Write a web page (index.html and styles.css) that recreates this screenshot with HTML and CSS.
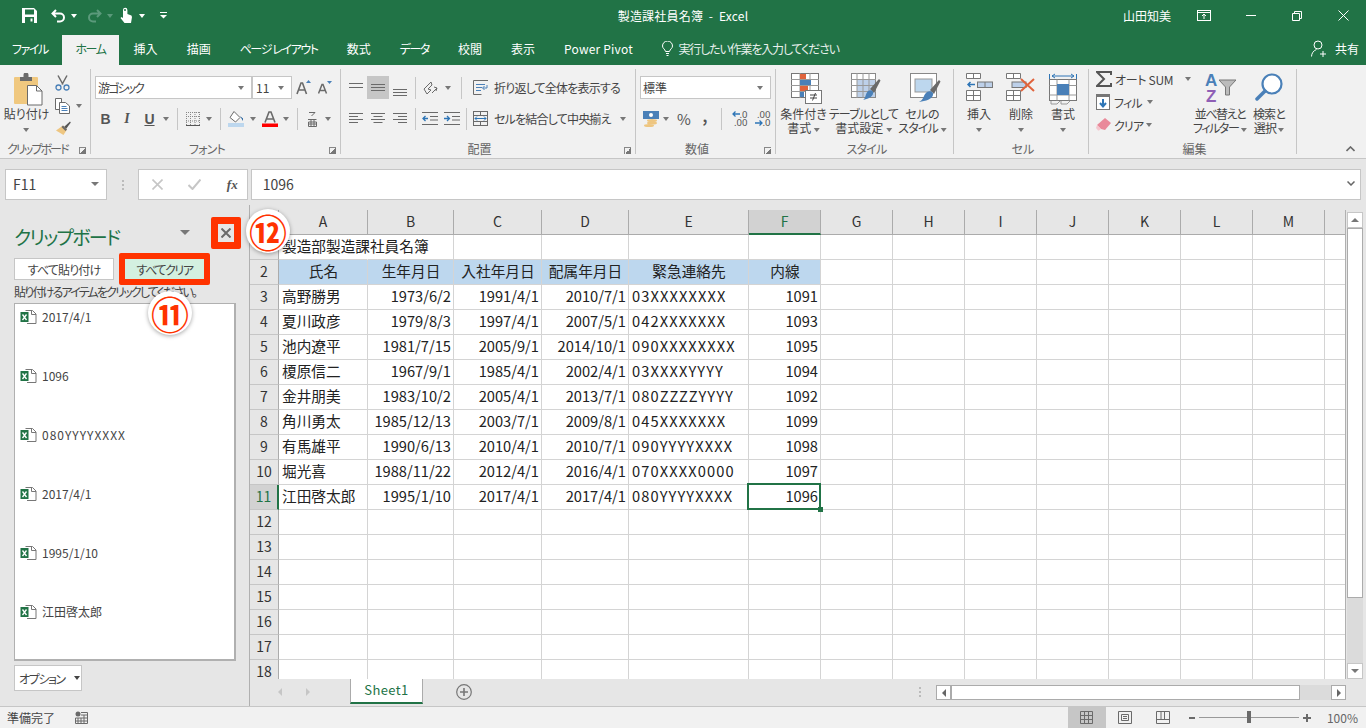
FILE: index.html
```html
<!DOCTYPE html>
<html lang="ja">
<head>
<meta charset="utf-8">
<title>製造課社員名簿 - Excel</title>
<link rel="stylesheet" href="styles.css">
</head>
<body>
<svg class="defs" aria-hidden="true">
  <symbol id="xl" viewBox="0 0 17 16">
    <path d="M5.500 1.500h7l3.500 3.500v9.500h-9" fill="#fff" stroke="#777"/><path d="M11.500 1.500v4h4.500" fill="none" stroke="#777"/>
    <rect x="0.500" y="3" width="8" height="10" fill="#217346"/><path d="M2.500 5.500l4 5.500M6.500 5.500l-4 5.500" stroke="#fff" stroke-width="1.300"/>
  </symbol>
</svg>
<div class="app">
  <header class="titlebar">
    <div class="qat">
      <svg class="q-save" width="15" height="15" viewBox="0 0 15 15"><path d="M0 0h12l3 3v12H0z" fill="#fff"/><rect x="3" y="1.500" width="9" height="5" fill="#217346"/><rect x="3" y="9" width="9" height="6" fill="#217346"/><rect x="8.500" y="10.500" width="2" height="3" fill="#fff"/></svg>
      <svg class="q-undo" width="15" height="14" viewBox="0 0 15 14"><path d="M5 1L1.500 4.500 5 8M2 4.500h7a4 4 0 0 1 0 8H6" fill="none" stroke="#fff" stroke-width="2"/></svg>
      <i class="caret white q-c1"></i>
      <svg class="q-redo" width="15" height="14" viewBox="0 0 15 14"><path d="M10 1l3.500 3.500L10 8M13 4.500H6a4 4 0 0 0 0 8h3" fill="none" stroke="#5b9a7b" stroke-width="2"/></svg>
      <i class="caret dim q-c2"></i>
      <svg class="q-touch" width="13" height="17" viewBox="0 0 13 17"><path d="M3 3a2.200 2.200 0 0 1 4.400 0v4l4 1.500.6 1.500-1 6H4.500L.5 11l1-1 1.500 1z" fill="#fff"/><circle cx="5" cy="3" r="1" fill="#217346"/></svg>
      <i class="caret white q-c3"></i>
      <svg class="q-more" width="7" height="7" viewBox="0 0 7 7"><path d="M0 .5h7" stroke="#fff"/><path d="M0 3h7L3.500 6.500z" fill="#fff"/></svg>
    </div>
    <div class="doc-title">製造課社員名簿&nbsp;&nbsp;-&nbsp;&nbsp;Excel</div>
    <div class="win">
      <span class="user">山田知美</span>
      <svg class="w-disp" width="14" height="11" viewBox="0 0 14 11"><rect x=".5" y=".5" width="13" height="10" fill="none" stroke="#fff"/><path d="M0 2.500h14M7 9V4M5 6l2-2 2 2" fill="none" stroke="#fff"/></svg>
      <svg class="w-min" width="10" height="1" viewBox="0 0 10 1"><path d="M0 .5h10" stroke="#fff"/></svg>
      <svg class="w-rest" width="10" height="10" viewBox="0 0 10 10"><path d="M.5 2.500h7v7h-7zM2.500 2.500v-2h7v7h-2" fill="none" stroke="#fff"/></svg>
      <svg class="w-close" width="11" height="11" viewBox="0 0 11 11"><path d="M.5.500l10 10M10.500.500l-10 10" stroke="#fff"/></svg>
    </div>
  </header>

  <nav class="tabs">
    <span class="tab first kana">ファイル</span>
    <span class="tab active kana">ホーム</span>
    <span class="tab">挿入</span>
    <span class="tab">描画</span>
    <span class="tab kana">ページ レイアウト</span>
    <span class="tab">数式</span>
    <span class="tab kana">データ</span>
    <span class="tab">校閲</span>
    <span class="tab">表示</span>
    <span class="tab latin">Power Pivot</span>
    <span class="tell">
      <svg width="11" height="15" viewBox="0 0 11 15"><path d="M3.500 10.500C3 8 .5 7.500.5 5a5 5 0 0 1 10 0c0 2.500-2.500 3-3 5.500zM4 12.500h3M4.500 14.500h2" fill="none" stroke="#fff"/></svg>
      <span>実行したい作業を入力してください</span>
    </span>
    <span class="share">
      <svg width="17" height="17" viewBox="0 0 17 17"><circle cx="7" cy="5" r="4" fill="none" stroke="#fff"/><path d="M.5 16.500c0-3 2-6 5-7M12 11v6M9 14h6" fill="none" stroke="#fff"/></svg>
      共有
    </span>
  </nav>

  <section class="ribbon">
    <div class="group g-clip">
      <div class="g-body clip-body">
        <div class="big paste">
          <svg width="30" height="34" viewBox="0 0 30 34"><rect x="0" y="4" width="24" height="27" rx="1" fill="#f0c87f"/><path d="M6 8V4h3.500V2a2.500 2.500 0 0 1 5 0v2H18v4z" fill="#6a6a6a"/><path d="M13.500 12.500h9l5.500 5.500v14H13.500z" fill="#fff" stroke="#6a6a6a"/><path d="M22.500 12.500V18H28" fill="none" stroke="#6a6a6a"/></svg>
          <span class="big-label">貼り付け<br><i class="caret"></i></span>
        </div>
        <div class="clip-col">
          <svg width="15" height="16" viewBox="0 0 15 16"><path d="M3 .5l5 9M12 .5l-5 9" stroke="#6a6a6a" stroke-width="1.500"/><circle cx="3.500" cy="12.500" r="2.500" fill="none" stroke="#4a80b8" stroke-width="1.300"/><circle cx="11.500" cy="12.500" r="2.500" fill="none" stroke="#4a80b8" stroke-width="1.300"/></svg>
          <div class="clip-copy">
            <svg width="15" height="16" viewBox="0 0 15 16"><path d="M.5.500h6v11h-6z" fill="#fff" stroke="#6a6a6a"/><path d="M4.500 4.500h6l4 3.500v7.500h-10z" fill="#fff" stroke="#6a6a6a"/><path d="M6.500 8.500h5M6.500 10.500h6M6.500 12.500h6" stroke="#4a80b8"/></svg>
            <i class="caret"></i>
          </div>
          <svg width="16" height="15" viewBox="0 0 16 15"><path d="M9 6l6-5.500.8 1L11 8z" fill="#555"/><path d="M8 4.500l4 4-3.500 5.500L1 9.500z" fill="#eec681"/><path d="M8 4.500l4 4-1.500 1.500-4-4z" fill="#6a6a6a"/></svg>
        </div>
      </div>
      <div class="g-label"><span class="k3">クリップボード</span><i class="launch"></i></div>
    </div>

    <div class="group g-font">
      <div class="g-body">
        <div class="row">
          <div class="select s-font"><span class="k3">游ゴシック</span><i class="caret"></i></div>
          <div class="select s-size"><span>11</span><i class="caret"></i></div>
          <div class="tool w21 ml1"><svg width="15" height="15" viewBox="0 0 15 15"><path d="M1 14L5 3h1.500l4 11M2.500 10h6" fill="none" stroke="#6a6a6a" stroke-width="1.600"/><path d="M10 3l2.500-3L15 3z" fill="#4a80b8"/></svg></div>
          <div class="tool w22"><svg width="14" height="13" viewBox="0 0 14 13"><path d="M.5 12.500L4 3.500h1l3.500 9M2 9.500h5" fill="none" stroke="#6a6a6a" stroke-width="1.500"/><path d="M9 0h5l-2.500 3z" fill="#4a80b8"/></svg></div>
        </div>
        <div class="row">
          <div class="tool w21 fmt b">B</div>
          <div class="tool w22 fmt it">I</div>
          <div class="tool w23 fmt un">U</div>
          <div class="tool w10"><i class="caret"></i></div>
          <div class="tool w12"><i class="vsep"></i></div>
          <div class="tool w19"><svg width="14" height="14" viewBox="0 0 14 14"><path d="M.5 0v14M4.500 0v13M9 0v13M13.500 0v13M0 .5h14M0 4.500h14M0 9h14" stroke="#888" stroke-dasharray="1 1" fill="none"/><path d="M0 13.500h14" stroke="#555"/></svg></div>
          <div class="tool w13"><i class="caret"></i></div>
          <div class="tool w10"><i class="vsep"></i></div>
          <div class="tool w22"><svg width="17" height="16" viewBox="0 0 17 16"><path d="M6 .5l6 6-4.500 4.500L2 6.500z" fill="#fff" stroke="#6a6a6a"/><path d="M12 5l3 2.500V10z" fill="#1f5f9e"/><rect x="0" y="12" width="16" height="4" fill="#bdd7ee"/></svg></div>
          <div class="tool w11"><i class="caret"></i></div>
          <div class="tool w24"><svg width="16" height="16" viewBox="0 0 16 16"><path d="M3 11.500L7 1h2l4 10.500M4.500 8h7" fill="none" stroke="#6a6a6a" stroke-width="1.600"/><rect x="0" y="12.500" width="16" height="3.500" fill="#f00"/></svg></div>
          <div class="tool w8"><i class="caret"></i></div>
          <div class="tool w14"><i class="vsep"></i></div>
          <div class="tool w16"><svg width="9" height="16" viewBox="0 0 9 16"><path d="M1 1.500h6L3.500 5M0 8.500h8.500M.5 11h8v4.500h-8zM3 8.500v7M6 8.500v7M.5 13h8" fill="none" stroke="#6a6a6a"/></svg></div>
          <div class="tool w16"><i class="caret"></i></div>
        </div>
      </div>
      <div class="g-label"><span class="center k1">フォント</span><i class="launch"></i></div>
    </div>

    <div class="group g-align">
      <div class="g-body">
        <div class="row">
          <div class="tool w22"><svg width="14" height="9" viewBox="0 0 14 9"><path d="M0 .5h14M0 4.500h14" stroke="#6a6a6a"/></svg></div>
          <div class="tool w22 on"><svg width="14" height="7" viewBox="0 0 14 7"><path d="M0 .5h14M0 3.500h14M0 6.500h14" stroke="#6a6a6a"/></svg></div>
          <div class="tool w22 low"><svg width="14" height="7" viewBox="0 0 14 7"><path d="M0 .5h14M0 3.500h14M0 6.500h14" stroke="#6a6a6a"/></svg></div>
          <div class="tool w8"><i class="vsep"></i></div>
          <div class="tool w24"><svg width="16" height="16" viewBox="0 0 16 16"><path d="M1 9l7-7 1 3-4 4 3 1-4 4zM9 13l5-5M11 7l3 1-1 3" fill="none" stroke="#6a6a6a"/></svg></div>
          <div class="tool w10"><i class="caret"></i></div>
          <div class="tool w17"><i class="vsep"></i></div>
          <div class="tool w20"><svg width="15" height="15" viewBox="0 0 15 15"><path d="M.5.500h15M.5.500v14h8" fill="none" stroke="#6a6a6a"/><path d="M3 4.500h9M3 7.500h6M3 10.500h5" stroke="#4a80b8"/><path d="M14 5v3h-4M11.500 6L9.500 8l2 2" fill="none" stroke="#4a80b8"/></svg></div>
          <span class="tool-text k1">折り返して全体を表示する</span>
        </div>
        <div class="row">
          <div class="tool w22"><svg width="14" height="11" viewBox="0 0 14 11"><path d="M0 .5h14M0 3.500h9M0 6.500h14M0 9.500h9" stroke="#6a6a6a"/></svg></div>
          <div class="tool w22"><svg width="14" height="11" viewBox="0 0 14 11"><path d="M0 .5h14M2.500 3.500h9M0 6.500h14M2.500 9.500h9" stroke="#6a6a6a"/></svg></div>
          <div class="tool w22"><svg width="14" height="11" viewBox="0 0 14 11"><path d="M0 .5h14M5 3.500h9M0 6.500h14M5 9.500h9" stroke="#6a6a6a"/></svg></div>
          <div class="tool w8"><i class="vsep"></i></div>
          <div class="tool w22"><svg width="16" height="13" viewBox="0 0 16 13"><path d="M0 .5h16M8 4.500h8M8 8h8M0 12.500h16" stroke="#6a6a6a"/><path d="M6 6.500H1M3.500 4l-2.500 2.500L3.500 9" fill="none" stroke="#2e75b6" stroke-width="1.300"/></svg></div>
          <div class="tool w22"><svg width="16" height="13" viewBox="0 0 16 13"><path d="M0 .5h16M8 4.500h8M8 8h8M0 12.500h16" stroke="#6a6a6a"/><path d="M0 6.500h5M3 4l2.500 2.500L3 9" fill="none" stroke="#2e75b6" stroke-width="1.300"/></svg></div>
          <div class="tool w7"><i class="vsep"></i></div>
          <div class="tool w20"><svg width="15" height="15" viewBox="0 0 15 15"><rect x=".5" y=".5" width="14" height="14" fill="none" stroke="#6a6a6a"/><path d="M0 4.500h15M0 10.500h15M7.500 0v4.500M7.500 10.500v4.500" stroke="#6a6a6a"/><path d="M2 7.500h11M4 5.500l-2 2 2 2M11 5.500l2 2-2 2" fill="none" stroke="#2e75b6"/></svg></div>
          <span class="tool-text k1">セルを結合して中央揃え</span>
          <i class="caret ml9"></i>
        </div>
      </div>
      <div class="g-label"><span class="center">配置</span><i class="launch"></i></div>
    </div>

    <div class="group g-num">
      <div class="g-body">
        <div class="row">
          <div class="select s-num"><span>標準</span><i class="caret"></i></div>
        </div>
        <div class="row">
          <div class="tool w22"><svg width="17" height="16" viewBox="0 0 17 16"><rect x="0" y="0" width="16" height="8" fill="#4a80b8"/><circle cx="8" cy="4" r="2" fill="#fff"/><ellipse cx="9" cy="9.500" rx="5" ry="1.500" fill="#eec681"/><ellipse cx="9" cy="12" rx="5" ry="1.500" fill="#eec681"/><ellipse cx="6" cy="14.500" rx="5" ry="1.500" fill="#eec681"/></svg></div>
          <div class="tool w8"><i class="caret"></i></div>
          <div class="tool w28 pct">%</div>
          <div class="tool w14 comma">,</div>
          <div class="tool w18"><i class="vsep"></i></div>
          <div class="tool w20"><svg class="dec-icon" width="16" height="17" viewBox="0 0 16 17"><path d="M8 4H1.500M3.500 1.500L1 4l2.500 2.500" fill="none" stroke="#2e75b6" stroke-width="1.300"/><text x="7.500" y="7.500" class="dec">.0</text><text x="2" y="16" class="dec">.00</text></svg></div>
          <div class="tool w24"><svg class="dec-icon" width="16" height="17" viewBox="0 0 16 17"><text x="3" y="7.500" class="dec">.00</text><path d="M1 13h6.500M5.500 10.500L8 13l-2.500 2.500" fill="none" stroke="#2e75b6" stroke-width="1.300"/><text x="8.500" y="16" class="dec">.0</text></svg></div>
        </div>
      </div>
      <div class="g-label"><span class="center">数値</span><i class="launch"></i></div>
    </div>

    <div class="group g-style">
      <div class="g-body big-row">
        <div class="big w59">
          <svg width="31" height="31" viewBox="0 0 31 31"><rect x=".5" y=".5" width="27" height="24" fill="#fff" stroke="#777"/><path d="M9 0v25M19 0v25M0 6.500h28M0 12.500h28M0 18.500h28" stroke="#999"/><rect x="9" y="1" width="6" height="5" fill="#e0633c"/><rect x="9" y="7" width="11" height="5" fill="#4a80b8"/><rect x="9" y="13" width="8" height="5" fill="#e0633c"/><rect x="9" y="19" width="4" height="5" fill="#4a80b8"/><rect x="14.500" y="17.500" width="16" height="13" fill="#fff" stroke="#777"/><path d="M19 22h7M19 25h7M24.500 20l-3 7.500" stroke="#444" fill="none"/></svg>
          <span class="big-label">条件付き<br>書式 <i class="caret"></i></span>
        </div>
        <div class="big w59 wide">
          <svg width="30" height="29" viewBox="0 0 30 29"><rect x=".5" y=".5" width="24" height="24" fill="#fff" stroke="#888"/><rect x="6" y="6" width="18" height="18" fill="#bdd0e9"/><path d="M6 0v25M12 0v25M18 0v25M0 6.500h25M0 12.500h25M0 18.500h25" stroke="#999"/><path d="M19 16l9-10 1.500 1.500L23 20z" fill="#6a6a6a"/><path d="M17 18c3-2 6 0 5 3-1 3-5 5-10 6 3-2 2-6 5-9z" fill="#4a80b8"/></svg>
          <span class="big-label"><span class="k1">テーブルとして</span><br>書式設定 <i class="caret"></i></span>
        </div>
        <div class="big w59">
          <svg width="31" height="30" viewBox="0 0 31 30"><rect x=".5" y=".5" width="26" height="24" fill="#fff" stroke="#888"/><rect x="5" y="6" width="17" height="13" fill="#bdd7ee" stroke="#999"/><path d="M20 17l9-10 1.500 1.500L24 21z" fill="#6a6a6a"/><path d="M17 19c3-2 7 0 6 3-1 4-7 6-14 7 5-2 4-7 8-10z" fill="#4a80b8"/></svg>
          <span class="big-label">セルの<br><span class="k1">スタイル</span> <i class="caret"></i></span>
        </div>
      </div>
      <div class="g-label"><span class="center k1">スタイル</span></div>
    </div>

    <div class="group g-cell">
      <div class="g-body big-row">
        <div class="big w42">
          <svg width="27" height="28" viewBox="0 0 27 28"><path d="M.5.500h14v5h-14zM7.500.500v5M.5 17.500h14v10H.5zM.5 22.500h14M7.500 17.500v10" fill="#fff" stroke="#777"/><rect x="11.500" y="9" width="15" height="5.500" fill="#bdd0e9" stroke="#777"/><path d="M9 11.500H2M4.500 9L2 11.500 4.500 14" fill="none" stroke="#2e75b6" stroke-width="1.500"/><path d="M19 9v5.500" stroke="#777"/></svg>
          <span class="big-label">挿入<br><i class="caret"></i></span>
        </div>
        <div class="big w42">
          <svg width="30" height="28" viewBox="0 0 30 28"><path d="M.5.500h14v5h-14zM7.500.500v5M.5 17.500h14v10H.5zM.5 22.500h14M7.500 17.500v10" fill="#fff" stroke="#777"/><rect x="6" y="9" width="14" height="5.500" fill="#bdd0e9" stroke="#777"/><path d="M15 6l13 12M28 6L15 18" stroke="#e0633c" stroke-width="2"/></svg>
          <span class="big-label">削除<br><i class="caret"></i></span>
        </div>
        <div class="big w42">
          <svg width="28" height="32" viewBox="0 0 28 32"><path d="M.5 1v5M27.500 1v5M3 3h22M6 1L3 3l3 2M22 1l3 2-3 2" fill="none" stroke="#2e75b6"/><rect x=".5" y="6.500" width="27" height="21" fill="#fff" stroke="#777"/><path d="M8 6.500v21M20 6.500v21M.5 12.500h27M.5 22h27" stroke="#999"/><rect x="8" y="11" width="12" height="11" fill="#4a80b8"/><path d="M2 28v3h6l3-3M12 28v3h6l3-3" fill="none" stroke="#999"/></svg>
          <span class="big-label">書式<br><i class="caret"></i></span>
        </div>
      </div>
      <div class="g-label"><span class="center">セル</span></div>
    </div>

    <div class="group g-edit">
      <div class="g-body edit-body">
        <div class="edit-col">
          <div class="edit-row">
            <svg width="16" height="16" viewBox="0 0 16 16"><path d="M15 4V1H1l7 7-7 7h14v-3" fill="none" stroke="#555" stroke-width="2"/></svg>
            <span class="s1">オート SUM</span><i class="caret ml11"></i>
          </div>
          <div class="edit-row">
            <svg width="15" height="16" viewBox="0 0 15 16"><rect x=".5" y=".5" width="13" height="15" fill="#fff" stroke="#777"/><rect x="0" y="0" width="14" height="3" fill="#777"/><path d="M7 5v7M4 9l3 3.500L10 9" fill="none" stroke="#2e75b6" stroke-width="2"/></svg>
            <span class="k1">フィル</span><i class="caret ml2"></i>
          </div>
          <div class="edit-row">
            <svg width="15" height="14" viewBox="0 0 15 14"><path d="M9 0l6 5-6 7-4-1-4-4z" fill="#e9899a"/><path d="M1 7l4 4 -2 1.500H2L0 10z" fill="#f5c6ce"/></svg>
            <span class="k1">クリア</span><i class="caret"></i>
          </div>
        </div>
        <div class="big w52">
          <svg width="31" height="31" viewBox="0 0 31 31"><text x="0" y="13" class="az-a">A</text><text x="1" y="29" class="az-z">Z</text><path d="M14 7h17l-6.500 7v8h-4v-8z" fill="#bbb" stroke="#777"/></svg>
          <span class="big-label"><span class="k2">並べ替えと</span><br><span class="k2">フィルター</span> <i class="caret"></i></span>
        </div>
        <div class="big w46">
          <svg width="28" height="28" viewBox="0 0 28 28"><circle cx="17" cy="11" r="9.500" fill="#fff" stroke="#4a80b8" stroke-width="2.200"/><path d="M10 18L2 26" stroke="#4a80b8" stroke-width="3.500" stroke-linecap="round"/></svg>
          <span class="big-label k1">検索と<br>選択 <i class="caret"></i></span>
        </div>
      </div>
      <div class="g-label"><span class="center">編集</span></div>
    </div>

    <div class="collapse"><svg width="9" height="6" viewBox="0 0 9 6"><path d="M.5 5l4-4 4 4" fill="none" stroke="#6a6a6a" stroke-width="1.600"/></svg></div>
  </section>

  <section class="formula">
    <div class="namebox"><span>F11</span><i class="caret big-caret"></i></div>
    <div class="fdots"></div>
    <div class="fbtns">
      <svg width="11" height="11" viewBox="0 0 11 11"><path d="M.5.500l10 10M10.500.500l-10 10" stroke="#c6c6c6" stroke-width="1.600"/></svg>
      <svg width="13" height="11" viewBox="0 0 13 11"><path d="M.5 6l4 4L12.500.5" fill="none" stroke="#c6c6c6" stroke-width="2"/></svg>
      <span class="fx">fx</span>
    </div>
    <div class="finput"><span>1096</span><svg width="8" height="5" viewBox="0 0 8 5"><path d="M.5.500L4 4 7.500.500" fill="none" stroke="#666" stroke-width="1.500"/></svg></div>
  </section>

  <main class="main">
    <aside class="pane">
      <div class="pane-head"><h2>クリップボード</h2><i class="caret pane-caret"></i>
        <div class="pane-close"><svg width="10" height="10" viewBox="0 0 10 10"><path d="M.5.500l9 9M9.500.500l-9 9" stroke="#6a6a6a" stroke-width="2"/></svg></div>
      </div>
      <div class="pane-btns">
        <button class="btn k1">すべて貼り付け</button>
        <button class="btn clear k2">すべてクリア</button>
      </div>
      <p class="hint">貼り付けるアイテムをクリックしてください。</p>
      <ul class="clips">
        <li><svg width="17" height="16"><use href="#xl"/></svg>2017/4/1</li>
        <li><svg width="17" height="16"><use href="#xl"/></svg>1096</li>
        <li><svg width="17" height="16"><use href="#xl"/></svg><span class="wide-latin">080YYYYXXXX</span></li>
        <li><svg width="17" height="16"><use href="#xl"/></svg>2017/4/1</li>
        <li><svg width="17" height="16"><use href="#xl"/></svg>1995/1/10</li>
        <li><svg width="17" height="16"><use href="#xl"/></svg>江田啓太郎</li>
      </ul>
      <button class="btn opt"><span class="k2">オプション</span><i class="caret dark"></i></button>
      <span class="badge b11">⑪</span>
      <span class="badge b12">⑫</span>
    </aside>

    <div class="work">
      <div class="sheet-row">
        <div class="sheet">
          <table>
            <colgroup><col class="c-h"><col class="c-a"><col class="c-b"><col class="c-c"><col class="c-d"><col class="c-e"><col class="c-n"><col class="c-n"><col class="c-n"><col class="c-n"><col class="c-n"><col class="c-n"><col class="c-n"><col class="c-n"><col class="c-n"></colgroup>
            <thead><tr><th></th><th>A</th><th>B</th><th>C</th><th>D</th><th>E</th><th class="sel">F</th><th>G</th><th>H</th><th>I</th><th>J</th><th>K</th><th>L</th><th>M</th><th></th></tr></thead>
            <tbody>
              <tr><th>1</th><td class="over">製造部製造課社員名簿</td><td></td><td></td><td></td><td></td><td></td><td></td><td></td><td></td><td></td><td></td><td></td><td></td><td></td></tr>
              <tr><th>2</th><td class="hd">氏名</td><td class="hd">生年月日</td><td class="hd">入社年月日</td><td class="hd">配属年月日</td><td class="hd">緊急連絡先</td><td class="hd">内線</td><td></td><td></td><td></td><td></td><td></td><td></td><td></td><td></td></tr>
              <tr><th>3</th><td>高野勝男</td><td class="r">1973/6/2</td><td class="r">1991/4/1</td><td class="r">2010/7/1</td><td class="wide-latin">03XXXXXXXX</td><td class="r">1091</td><td></td><td></td><td></td><td></td><td></td><td></td><td></td><td></td></tr>
              <tr><th>4</th><td>夏川政彦</td><td class="r">1979/8/3</td><td class="r">1997/4/1</td><td class="r">2007/5/1</td><td class="wide-latin">042XXXXXXX</td><td class="r">1093</td><td></td><td></td><td></td><td></td><td></td><td></td><td></td><td></td></tr>
              <tr><th>5</th><td>池内遼平</td><td class="r">1981/7/15</td><td class="r">2005/9/1</td><td class="r">2014/10/1</td><td class="wide-latin">090XXXXXXXX</td><td class="r">1095</td><td></td><td></td><td></td><td></td><td></td><td></td><td></td><td></td></tr>
              <tr><th>6</th><td>榎原信二</td><td class="r">1967/9/1</td><td class="r">1985/4/1</td><td class="r">2002/4/1</td><td class="wide-latin">03XXXXYYYY</td><td class="r">1094</td><td></td><td></td><td></td><td></td><td></td><td></td><td></td><td></td></tr>
              <tr><th>7</th><td>金井朋美</td><td class="r">1983/10/2</td><td class="r">2005/4/1</td><td class="r">2013/7/1</td><td class="wide-latin">080ZZZZYYYY</td><td class="r">1092</td><td></td><td></td><td></td><td></td><td></td><td></td><td></td><td></td></tr>
              <tr><th>8</th><td>角川勇太</td><td class="r">1985/12/13</td><td class="r">2003/7/1</td><td class="r">2009/8/1</td><td class="wide-latin">045XXXXXXX</td><td class="r">1099</td><td></td><td></td><td></td><td></td><td></td><td></td><td></td><td></td></tr>
              <tr><th>9</th><td>有馬雄平</td><td class="r">1990/6/13</td><td class="r">2010/4/1</td><td class="r">2010/7/1</td><td class="wide-latin">090YYYYXXXX</td><td class="r">1098</td><td></td><td></td><td></td><td></td><td></td><td></td><td></td><td></td></tr>
              <tr><th>10</th><td>堀光喜</td><td class="r">1988/11/22</td><td class="r">2012/4/1</td><td class="r">2016/4/1</td><td class="wide-latin">070XXXX0000</td><td class="r">1097</td><td></td><td></td><td></td><td></td><td></td><td></td><td></td><td></td></tr>
              <tr><th class="sel">11</th><td>江田啓太郎</td><td class="r">1995/1/10</td><td class="r">2017/4/1</td><td class="r">2017/4/1</td><td class="wide-latin">080YYYYXXXX</td><td class="r active-cell">1096</td><td></td><td></td><td></td><td></td><td></td><td></td><td></td><td></td></tr>
              <tr><th>12</th><td></td><td></td><td></td><td></td><td></td><td></td><td></td><td></td><td></td><td></td><td></td><td></td><td></td><td></td></tr>
              <tr><th>13</th><td></td><td></td><td></td><td></td><td></td><td></td><td></td><td></td><td></td><td></td><td></td><td></td><td></td><td></td></tr>
              <tr><th>14</th><td></td><td></td><td></td><td></td><td></td><td></td><td></td><td></td><td></td><td></td><td></td><td></td><td></td><td></td></tr>
              <tr><th>15</th><td></td><td></td><td></td><td></td><td></td><td></td><td></td><td></td><td></td><td></td><td></td><td></td><td></td><td></td></tr>
              <tr><th>16</th><td></td><td></td><td></td><td></td><td></td><td></td><td></td><td></td><td></td><td></td><td></td><td></td><td></td><td></td></tr>
              <tr><th>17</th><td></td><td></td><td></td><td></td><td></td><td></td><td></td><td></td><td></td><td></td><td></td><td></td><td></td><td></td></tr>
              <tr><th>18</th><td></td><td></td><td></td><td></td><td></td><td></td><td></td><td></td><td></td><td></td><td></td><td></td><td></td><td></td></tr>
            </tbody>
          </table>
        </div>
        <div class="vscroll">
          <div class="sb-btn"><i class="tri up"></i></div>
          <div class="sb-thumb"></div>
          <div class="sb-track"></div>
          <div class="sb-btn"><i class="tri down"></i></div>
        </div>
      </div>
      <div class="sheetbar">
        <i class="tri left nav1"></i><i class="tri right nav2"></i>
        <div class="sheet-tab">Sheet1</div>
        <svg class="add" width="16" height="16" viewBox="0 0 16 16"><circle cx="8" cy="8" r="7.300" fill="none" stroke="#777" stroke-width="1.200"/><path d="M4 8h8M8 4v8" stroke="#777" stroke-width="1.600"/></svg>
        <div class="bar-dots"></div>
        <div class="hscroll">
          <div class="hs-btn"><i class="tri left dark-t"></i></div>
          <div class="hs-thumb"></div>
          <div class="hs-track"></div>
          <div class="hs-btn"><i class="tri right dark-t"></i></div>
        </div>
      </div>
    </div>
  </main>

  <footer class="status">
    <span class="ready">準備完了</span>
    <svg class="macro" width="13" height="13" viewBox="0 0 13 13"><circle cx="3" cy="3" r="2.500" fill="#6a6a6a"/><path d="M6 1.500h6.500v11H.5V7M3 7v5.500M6 7v5.500M9 4v8.500M.5 7h12M.5 10h12M6 4h6.500" fill="none" stroke="#6a6a6a"/></svg>
    <div class="views">
      <div class="view on"><svg width="13" height="13" viewBox="0 0 13 13"><path d="M.5.500h12v12H.5zM4.500.500v12M8.500.500v12M.5 4.500h12M.5 8.500h12" fill="none" stroke="#6a6a6a"/></svg></div>
      <div class="view"><svg width="14" height="13" viewBox="0 0 14 13"><path d="M.5.500h13v12H.5z" fill="none" stroke="#6a6a6a"/><path d="M3.500 3.500h7v6h-7zM5 5.500h4M5 7.500h4" fill="none" stroke="#6a6a6a"/></svg></div>
      <div class="view"><svg width="14" height="13" viewBox="0 0 14 13"><path d="M.5.500v12h13V.5h-13M.5 8.500h13M5 .5v8M8.500.500v8" fill="none" stroke="#6a6a6a"/></svg></div>
    </div>
    <div class="zoom">
      <svg width="6" height="2" viewBox="0 0 6 2"><path d="M0 1h6" stroke="#6a6a6a" stroke-width="2"/></svg>
      <div class="slider"><i class="knob"></i></div>
      <svg width="8" height="8" viewBox="0 0 8 8"><path d="M0 4h8M4 0v8" stroke="#6a6a6a" stroke-width="2"/></svg>
      <span class="pct-text">100%</span>
    </div>
  </footer>
</div>
</body>
</html>
```

FILE: styles.css
```css
* { box-sizing: border-box; }
html, body { margin: 0; padding: 0; }
body {
  width: 1366px; height: 728px; overflow: hidden;
  font-family: "Noto Sans CJK JP", "Noto Sans", sans-serif;
  font-feature-settings: "palt";
  font-size: 12px; color: #444; background: #e6e6e6;
}
.defs { display: none; }
.app { display: flex; flex-direction: column; height: 728px; position: relative; }
svg { display: block; flex: none; }
.k1 { letter-spacing: -.8px; } .k2 { letter-spacing: -1.400px; } .k3 { letter-spacing: -1.900px; } .s1 { letter-spacing: -.3px; }

.caret { display: inline-block; width: 0; height: 0; border: 3.500px solid transparent; border-bottom: 0; border-top: 4px solid #777; vertical-align: middle; flex: none; }
.caret.white { border-top-color: #fff; }
.caret.dim { border-top-color: #5b9a7b; }
.caret.dark { border-top-color: #444; margin-left: 9px; }
.ml1 { margin-left: 1px; } .ml2 { margin-left: 2px; } .ml9 { margin-left: 9px; } .ml11 { margin-left: 9px; }

/* title bar */
.titlebar { height: 35px; background: #217346; display: grid; grid-template-columns: 1fr auto 1fr; align-items: center; color: #fff; flex: none; padding-bottom: 4px; }
.qat { display: flex; align-items: center; padding-left: 22px; }
.q-undo { margin-left: 14px; } .q-c1 { margin-left: 5px; } .q-redo { margin-left: 10px; }
.q-c2 { margin-left: 5px; } .q-touch { margin-left: 7px; } .q-c3 { margin-left: 6px; } .q-more { margin-left: 15px; }
.doc-title { font-size: 12px; letter-spacing: .2px; }
.win { display: flex; align-items: center; justify-content: flex-end; padding-right: 17px; }
.user { font-size: 12px; width: 48px; margin-right: 26px; }
.w-min { margin-left: 35px; } .w-rest { margin-left: 36px; } .w-close { margin-left: 36px; }

/* tabs */
.tabs { height: 30px; background: #217346; display: flex; align-items: stretch; color: #fff; flex: none; }
.tab { padding: 0 14.500px 3px; display: flex; align-items: center; white-space: pre; }
.tab.kana { letter-spacing: -1.400px; }
.tab.latin { letter-spacing: .2px; }
.tab.first { padding-left: 12px; padding-right: 14px; }
.tab.active { background: #f1f1f1; color: #217346; padding: 0 13.500px 3px; }
.tell { display: flex; align-items: center; gap: 5px; margin-left: 15px; color: #e8f0ec; white-space: nowrap; padding-bottom: 3px; }
.tell span { letter-spacing: -1.150px; }
.share { margin-left: auto; padding: 0 7px 3px 0; display: flex; align-items: center; gap: 7px; }

/* ribbon */
.ribbon { height: 94px; background: #f1f1f1; border-bottom: 1px solid #c6c6c6; padding: 4px 0 3px; display: flex; flex: none; position: relative; }
.group { display: flex; flex-direction: column; height: 85px; border-right: 1px solid #c6c6c6; flex: none; }
.g-clip { width: 91px; } .g-font { width: 250px; padding-left: 4px; } .g-align { width: 295px; padding-left: 4px; }
.g-num { width: 140px; padding-left: 4px; } .g-style { width: 178px; } .g-cell { width: 135px; } .g-edit { width: 208px; }
.g-body { flex: 1; padding-top: 7px; display: flex; flex-direction: column; gap: 8px; min-height: 0; }
.g-label { height: 17px; display: flex; align-items: center; color: #666; font-size: 12px; line-height: 14px; position: relative; padding: 7px 3px 0 7px; }
.g-font .g-label, .g-align .g-label, .g-num .g-label { padding-right: 28px; }
.g-label .center { margin: 0 auto; }
.launch { width: 7px; height: 7px; border-left: 1px solid #888; border-top: 1px solid #888; background: linear-gradient(135deg, transparent 50%, #777 50%); position: absolute; right: 4px; bottom: 0; }
.row { display: flex; align-items: center; height: 23px; flex: none; }
.tool { height: 23px; display: flex; align-items: center; justify-content: center; flex: none; }
.tool-text { white-space: nowrap; margin-left: 4px; }
.w7 { width: 7px; } .w8 { width: 8px; } .w10 { width: 10px; } .w11 { width: 11px; } .w12 { width: 12px; } .w13 { width: 13px; } .w14 { width: 14px; } .w16 { width: 16px; } .w17 { width: 17px; } .w18 { width: 18px; } .w19 { width: 19px; } .w20 { width: 20px; } .w21 { width: 21px; } .w22 { width: 22px; } .w23 { width: 23px; } .w24 { width: 24px; } .w28 { width: 28px; }
.on { background: #c6c6c6; }
.low { align-items: flex-end; padding-bottom: 3px; }
.vsep { display: block; width: 1px; height: 22px; background: #c6c6c6; }
.fmt { font-family: "Liberation Serif", serif; font-size: 14px; color: #555; }
.fmt.b { font-family: "Liberation Sans", sans-serif; font-weight: 700; }
.fmt.it { font-style: italic; font-weight: 700; }
.fmt.un { font-family: "Liberation Sans", sans-serif; font-weight: 700; text-decoration: underline; }
.select { height: 23px; background: #fff; border: 1px solid #c6c6c6; display: flex; align-items: center; justify-content: space-between; padding: 0 7px 0 2px; font-size: 12px; color: #444; flex: none; }
.s-font { width: 157px; } .s-size { width: 40px; padding-left: 3px; } .s-num { width: 131px; }
.big { position: relative; height: 66px; display: flex; flex-direction: column; align-items: center; flex: none; }
.big-row { flex-direction: row; gap: 0; padding-top: 4px; }
.big-label { position: absolute; top: 34px; left: 50%; transform: translateX(-50%); width: max-content; line-height: 14px; text-align: center; white-space: nowrap; }
.w59 { width: 59px; } .w42 { width: 42px; } .w52 { width: 52px; } .w46 { width: 46px; }
.pct { font-size: 15px; color: #555; }
.comma { font-size: 15px; font-weight: 700; color: #555; padding-bottom: 6px; }
.dec-icon { overflow: visible; }
.dec { font: 9.500px "Noto Sans", sans-serif; fill: #555; }
.g-style .big:first-child { margin-left: -2px; }
.g-style .wide { margin-left: 1px; }
.g-style .big svg { margin-left: 5px; }
.clip-body { flex-direction: row; gap: 0; padding-top: 4px; }
.paste { width: 53px; }
.paste svg { margin-left: 4px; }
.clip-col { display: flex; flex-direction: column; gap: 7px; margin-top: 2px; padding-left: 2px; }
.clip-copy { display: flex; align-items: center; gap: 6px; }
.g-cell .big-row { padding-left: 4px; }
.edit-body { flex-direction: row; gap: 0; padding-top: 2px; }
.edit-col { width: 105px; padding-left: 7px; display: flex; flex-direction: column; gap: 7px; flex: none; }
.edit-row { height: 16px; display: flex; align-items: center; gap: 3px; white-space: nowrap; }
.edit-body .big { margin-top: 2px; }
.az-a { font: 700 17px "Liberation Sans", sans-serif; fill: #4a80b8; }
.az-z { font: 700 17px "Liberation Sans", sans-serif; fill: #8f5fb5; }
.collapse { position: absolute; right: 11px; bottom: 6px; }

/* formula bar */
.formula { height: 46px; display: flex; align-items: flex-start; padding: 10px 5px 0; flex: none; }
.namebox { width: 102px; height: 31px; background: #fff; border: 1px solid #c6c6c6; display: flex; align-items: center; justify-content: space-between; padding: 0 7px 2px; font-size: 14px; }
.big-caret { border-left-width: 4px; border-right-width: 4px; }
.fdots { width: 2px; height: 10px; margin: 11px 14px 0 15px; background: repeating-linear-gradient(#bbb 0 2px, transparent 2px 4px); flex: none; }
.fbtns { width: 110px; height: 31px; background: #fff; border: 1px solid #c6c6c6; display: flex; align-items: center; padding-left: 13px; gap: 25px; }
.fx { font: italic 700 13px "Liberation Serif", serif; color: #555; margin-left: 1px; }
.finput { margin-left: 3px; width: 1112px; height: 31px; background: #fff; border: 1px solid #c6c6c6; display: flex; align-items: center; justify-content: space-between; padding: 0 5px 2px 11px; font-size: 14px; }

/* main */
.main { height: 501px; display: flex; flex: none; position: relative; }
.pane { width: 249px; padding: 0 0 0 14px; position: relative; flex: none; display: flex; flex-direction: column; }
.pane-head { height: 48px; position: relative; }
.pane-head h2 { margin: 0; padding-top: 18px; font-size: 19px; font-weight: 400; line-height: 28px; color: #217346; letter-spacing: -1.700px; }
.pane-caret { position: absolute; left: 166px; top: 25px; border-left-width: 5px; border-right-width: 5px; border-top-width: 5px; }
.pane-close { position: absolute; left: 197px; top: 12px; width: 30px; height: 32px; border: 7px solid #f30; border-radius: 2px; background: #e6e6e6; display: flex; align-items: center; justify-content: center; }
.pane-btns { display: flex; align-items: center; height: 32px; gap: 5px; }
.btn { font-family: inherit; font-size: 12px; font-feature-settings: inherit; color: #444; background: #fff; border: 1px solid #c6c6c6; padding: 0; height: 22px; width: 100px; flex: none; white-space: nowrap; }
.btn.clear { width: 91px; height: 32px; border: 6px solid #f30; border-radius: 2px; background: #d3f0e0; }
.hint { margin: 0; height: 18px; line-height: 13px; white-space: nowrap; font-size: 12px; letter-spacing: -1.800px; }
.clips { list-style: none; margin: 0; padding: 0 0 0 5px; width: 222px; height: 358px; background: #fff; border: 2px solid #b0b0b0; border-width: 1px 2px 2px 1px; flex: none; }
.clips li { height: 59px; padding-top: 5px; display: flex; align-items: flex-start; gap: 5px; line-height: 16px; }
.clips .wide-latin { letter-spacing: 1px; }
.opt { width: 68px; height: 26px; margin-top: 4px; display: flex; align-items: center; padding-left: 4px; }
.badge { position: absolute; width: 44px; height: 44px; border-radius: 50%; background: #fff; box-shadow: 0 1px 4px rgba(0,0,0,.35); color: #f30; font-size: 38px; font-weight: 700; line-height: 44px; text-align: center; font-feature-settings: normal; z-index: 3; }
.b11 { left: 148px; top: 86px; }
.b12 { left: 246px; top: 4px; }

.work { flex: 1; display: flex; flex-direction: column; border-left: 1px solid #b0b0b0; min-width: 0; }
.sheet-row { height: 474px; display: flex; padding-top: 5px; flex: none; }
.sheet { width: 1096px; height: 469px; overflow: hidden; background: #fff; flex: none; border-right: 1px solid #b0b0b0; }
table { border-collapse: separate; border-spacing: 0; table-layout: fixed; width: 1147px; font-size: 14.670px; color: #222; font-feature-settings: normal; }
.c-h { width: 29px; } .c-a { width: 89px; } .c-b { width: 86px; } .c-c { width: 88px; } .c-d { width: 87px; } .c-e { width: 120px; } .c-n { width: 72px; }
th, td { height: 25px; font-weight: 400; border-right: 1px solid #d4d4d4; border-bottom: 1px solid #d4d4d4; white-space: nowrap; line-height: 20px; }
td { padding: 0 2px 2px 3px; background: #fff; }
th { padding: 0 0 2px; background: #e6e6e6; text-align: center; color: #333; border-right-color: #ababab; border-bottom-color: #ababab; font-size: 14px; }
tbody th { border-bottom-color: #c6c6c6; }
th.sel { background: #d2d2d2; color: #217346; }
thead th.sel { border-bottom: 2px solid #217346; }
tbody th.sel { border-right: 2px solid #217346; }
.r { text-align: right; }
.hd { background: #bdd7ee; text-align: center; }
.over { border-right-color: transparent; overflow: visible; }
.wide-latin { letter-spacing: 1.100px; }
.active-cell { position: relative; }
.active-cell::before { content: ""; position: absolute; left: -2px; top: -2px; right: -1px; bottom: -1px; border: 2px solid #217346; pointer-events: none; }
.active-cell::after { content: ""; position: absolute; right: -3px; bottom: -3px; width: 5px; height: 5px; background: #217346; }

.vscroll { width: 20px; padding: 2px 2px 0 1px; display: flex; flex-direction: column; height: 469px; flex: none; }
.sb-btn { height: 16px; width: 16px; background: #fff; border: 1px solid #c6c6c6; display: flex; align-items: center; justify-content: center; flex: none; }
.sb-thumb { height: 370px; width: 16px; background: #fff; border: 1px solid #ababab; flex: none; }
.sb-track { flex: 1; width: 16px; background: #dbdbdb; }
.tri { display: block; width: 0; height: 0; border: 4px solid transparent; flex: none; }
.tri.up { border-top: 0; border-bottom: 4px solid #777; }
.tri.down { border-bottom: 0; border-top: 4px solid #777; }
.tri.left { border-left: 0; border-right: 4px solid #c6c6c6; }
.tri.right { border-right: 0; border-left: 4px solid #c6c6c6; }
.tri.left.dark-t { border-right-color: #666; }
.tri.right.dark-t { border-left-color: #666; }

.sheetbar { height: 27px; display: flex; align-items: flex-start; position: relative; flex: none; }
.nav1 { margin: 9px 0 0 28px; }
.nav2 { margin: 9px 0 0 24px; }
.sheet-tab { margin-left: 40px; width: 73px; height: 25px; background: #fff; border: 1px solid #ababab; border-top: 0; border-bottom: 2px solid #217346; color: #217346; text-align: center; line-height: 22px; font-size: 13px; letter-spacing: .4px; }
.add { margin: 5px 0 0 33px; }
.bar-dots { width: 2px; height: 10px; margin: 8px 0 0 447px; background: repeating-linear-gradient(#bbb 0 2px, transparent 2px 4px); }
.hscroll { margin: 6px 0 0 15px; width: 410px; height: 15px; display: flex; }
.hs-btn { width: 15px; height: 15px; background: #fff; border: 1px solid #ababab; display: flex; align-items: center; justify-content: center; flex: none; }
.hs-thumb { width: 349px; background: #fff; border: 1px solid #ababab; flex: none; }
.hs-track { flex: 1; background: #dbdbdb; }

/* status */
.status { height: 22px; background: #f1f1f1; border-top: 1px solid #c6c6c6; display: flex; align-items: center; padding-left: 7px; flex: none; margin-top: auto; }
.macro { margin-left: 20px; }
.views { display: flex; margin-left: auto; height: 21px; }
.view { width: 38px; height: 21px; display: flex; align-items: center; justify-content: center; }
.zoom { display: flex; align-items: center; margin-left: 7px; padding-right: 8px; }
.slider { width: 100px; height: 1px; background: #999; margin: 0 4px; position: relative; }
.knob { position: absolute; left: 48px; top: -6px; width: 4px; height: 12px; background: #6a6a6a; }
.pct-text { margin-left: 16px; font-size: 12px; color: #666; }
```
